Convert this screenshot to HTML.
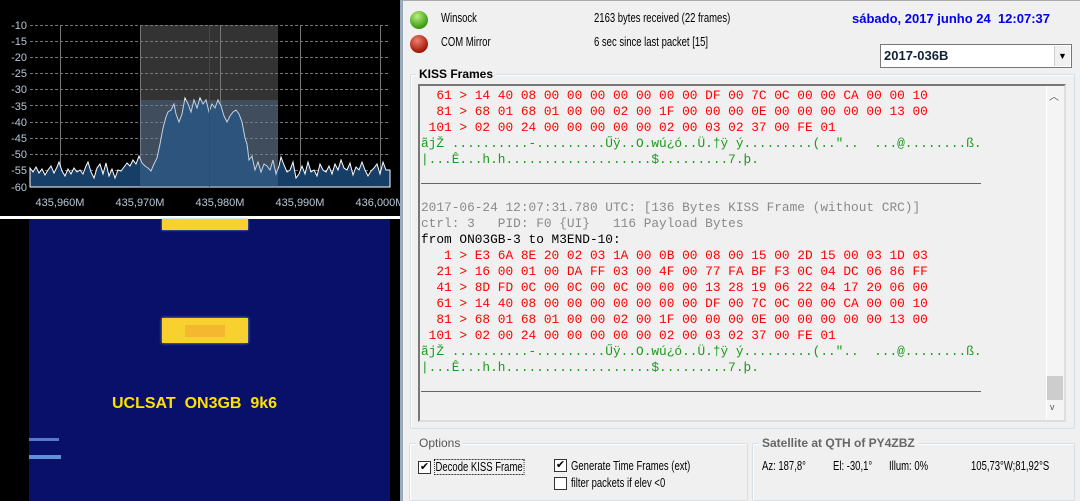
<!DOCTYPE html>
<html><head><meta charset="utf-8"><style>
*{margin:0;padding:0;box-sizing:border-box}
body{width:1080px;height:501px;overflow:hidden;background:#f0f0f0;position:relative;font-family:"Liberation Sans",sans-serif}
.a{position:absolute}
.t{position:absolute;font-size:12.5px;color:#000;white-space:nowrap;transform:scaleX(.76);transform-origin:left}
.mono{position:absolute;left:421px;font-family:"Liberation Mono",monospace;font-size:12.8px;line-height:16px;white-space:pre}
.r{color:#f00}.g{color:#1a9a1a}.gr{color:#8a8a8a}.k{color:#000}
.grp{position:absolute;border:1px solid #d5dfe5;border-radius:2px;box-shadow:inset 1px 1px 0 #fff}
.lg{position:absolute;background:#f0f0f0;padding:0 3px;font-size:12px;font-weight:bold;color:#000;top:-8px;left:6px}
.cb{position:absolute;width:13px;height:13px;border:1px solid #333;background:#fff;font-size:11px;line-height:11px;text-align:center}
</style></head><body>
<div class="a" style="left:0;top:0;width:400px;height:216px;background:#000"></div>
<svg class="a" style="left:0;top:0" width="400" height="216">
<rect x="140" y="25" width="138" height="162" fill="#333"/>
<g stroke="#777" stroke-dasharray="3,2" stroke-width="1">
<line x1="30" x2="390" y1="25.5" y2="25.5"/><line x1="30" x2="390" y1="41.5" y2="41.5"/><line x1="30" x2="390" y1="57.5" y2="57.5"/><line x1="30" x2="390" y1="73.5" y2="73.5"/><line x1="30" x2="390" y1="89.5" y2="89.5"/><line x1="30" x2="390" y1="105.5" y2="105.5"/><line x1="30" x2="390" y1="122.5" y2="122.5"/><line x1="30" x2="390" y1="138.5" y2="138.5"/><line x1="30" x2="390" y1="154.5" y2="154.5"/><line x1="30" x2="390" y1="170.5" y2="170.5"/>
</g>
<g stroke="#777"><line x1="60.5" x2="60.5" y1="25" y2="187"/><line x1="140.5" x2="140.5" y1="25" y2="187"/><line x1="220.5" x2="220.5" y1="25" y2="187"/><line x1="300.5" x2="300.5" y1="25" y2="187"/><line x1="380.5" x2="380.5" y1="25" y2="187"/></g>
<path d="M30,168 L33,172 36,167 39,173 42,169 45,175 48,170 51,166 54,173 57,167 59,162 62,171 65,176 68,169 71,174 74,168 77,172 80,170 83,174 86,166 88,162 91,172 94,178 97,168 100,164 103,174 106,163 109,176 112,169 115,178 118,170 121,171 124,167 127,163 130,166 133,160 136,164 139,156 142,163 145,166 148,168 151,171 154,164 157,158 160,144 163,128 166,117 168,112 171,110 174,104 176,114 179,122 182,114 185,98 188,104 191,112 194,100 197,108 200,98 203,104 206,100 209,112 212,104 215,108 218,100 221,106 224,116 227,122 230,116 233,112 236,110 239,114 242,122 245,138 247,144 249,160 252,156 255,170 258,162 261,172 264,164 267,166 270,170 273,160 276,174 279,166 281,157 284,165 287,172 290,170 293,162 296,178 299,174 302,166 305,174 308,162 311,172 314,170 317,176 320,164 323,170 326,172 329,166 332,174 335,164 338,170 341,160 344,168 347,170 350,163 353,175 356,167 359,170 362,162 365,170 368,176 371,171 374,168 377,164 380,174 383,162 386,170 390,170 L390,187 L30,187 Z" fill="#163e66" stroke="#fff" stroke-width="1"/>
<rect x="140" y="100" width="138" height="87" fill="#5a7fa8" opacity=".35"/>
<line x1="209.5" x2="209.5" y1="25" y2="187" stroke="#e00"/>
<g fill="#b8c8d8" font-family="Liberation Sans" font-size="11" text-anchor="end">
<text x="27" y="29">-10</text><text x="27" y="45">-15</text><text x="27" y="61">-20</text><text x="27" y="77">-25</text><text x="27" y="93">-30</text><text x="27" y="110">-35</text><text x="27" y="126">-40</text><text x="27" y="142">-45</text><text x="27" y="158">-50</text><text x="27" y="174">-55</text><text x="27" y="191">-60</text></g>
<g fill="#b8c8d8" font-family="Liberation Sans" font-size="11" text-anchor="middle">
<text x="60" y="206">435,960M</text><text x="140" y="206">435,970M</text><text x="220" y="206">435,980M</text><text x="300" y="206">435,990M</text><text x="380" y="206">436,000M</text></g>
</svg>
<div class="a" style="left:0;top:216px;width:400px;height:3px;background:#fff"></div>
<div class="a" style="left:0;top:219px;width:400px;height:282px;background:#000"></div>
<div class="a" style="left:29px;top:219px;width:361px;height:282px;background:#08106a"></div>
<div class="a" style="left:162px;top:219px;width:86px;height:11px;background:#f8d030;box-shadow:0 0 2px #7ac"></div>
<div class="a" style="left:162px;top:318px;width:86px;height:25px;background:#f8d030;box-shadow:0 0 3px #7ac"></div>
<div class="a" style="left:185px;top:325px;width:40px;height:12px;background:#f09030;opacity:.4"></div>
<div class="a" style="left:29px;top:438px;width:30px;height:3px;background:#5878c8"></div>
<div class="a" style="left:29px;top:455px;width:32px;height:4px;background:#6090d8"></div>
<div class="a" style="left:112px;top:395px;font:bold 16px 'Liberation Sans',sans-serif;color:#ffe000;white-space:pre">UCLSAT  ON3GB  9k6</div>
<div class="a" style="left:400px;top:0;width:3px;height:501px;background:#9ab"></div>
<div class="a" style="left:403px;top:0;width:677px;height:501px;background:#f0f0f0;border-top:1px solid #aaa"></div>
<div class="a" style="left:410px;top:11px;width:18px;height:18px;border-radius:50%;background:radial-gradient(circle at 40% 30%,#b8f080,#3a9a10 70%)"></div>
<div class="a" style="left:410px;top:35px;width:18px;height:18px;border-radius:50%;background:radial-gradient(circle at 40% 30%,#f08070,#a01808 70%)"></div>
<div class="t" style="left:441px;top:11px">Winsock</div>
<div class="t" style="left:441px;top:35px">COM Mirror</div>
<div class="t" style="left:594px;top:11px">2163 bytes received (22 frames)</div>
<div class="t" style="left:594px;top:35px">6 sec since last packet [15]</div>
<div class="a" style="left:852px;top:11px;font:bold 13px 'Liberation Sans',sans-serif;color:#0000ee;white-space:nowrap">sábado, 2017 junho 24&nbsp; 12:07:37</div>
<div class="a" style="left:880px;top:44px;width:192px;height:24px;border:1px solid #777;background:#fff"></div>
<div class="a" style="left:884px;top:48px;font:bold 13px 'Liberation Sans',sans-serif;color:#123">2017-036B</div>
<div class="a" style="left:1054px;top:46px;width:16px;height:20px;background:#f0f0f0;border-left:1px solid #ccc;font-size:9px;text-align:center;line-height:20px">▼</div>
<div class="grp" style="left:410px;top:74px;width:665px;height:355px"><div class="lg" style="left:5px">KISS Frames</div></div>
<div class="a" style="left:418px;top:84px;width:648px;height:338px;border:2px solid #777;border-right-color:#ddd;border-bottom-color:#ddd"></div>
<div class="a" style="left:1046px;top:86px;width:18px;height:334px;background:#f4f4f4;border-left:1px solid #fff"></div>
<div class="a" style="left:1047px;top:376px;width:16px;height:24px;background:#cdcdcd"></div>
<div class="a" style="left:1049px;top:88px;font-size:10px;color:#555">︿</div>
<div class="a" style="left:1050px;top:402px;font-size:9px;color:#555">v</div>
<div class="mono r" style="top:88px">  61 &gt; 14 40 08 00 00 00 00 00 00 00 DF 00 7C 0C 00 00 CA 00 00 10
  81 &gt; 68 01 68 01 00 00 02 00 1F 00 00 00 0E 00 00 00 00 00 13 00
 101 &gt; 02 00 24 00 00 00 00 00 02 00 03 02 37 00 FE 01</div>
<div class="mono g" style="top:136px">ãjŽ ..........-.........Űÿ..O.wú¿ó..Ü.†ÿ ý.........(.."..  ...@........ß.
|...Ê...h.h...................$.........7.þ.</div>
<div class="a" style="left:421px;top:183px;width:560px;height:1px;background:#666"></div>
<div class="mono gr" style="top:200px">2017-06-24 12:07:31.780 UTC: [136 Bytes KISS Frame (without CRC)]
ctrl: 3   PID: F0 {UI}   116 Payload Bytes</div>
<div class="mono k" style="top:232px">from ON03GB-3 to M3END-10:</div>
<div class="mono r" style="top:248px">   1 &gt; E3 6A 8E 20 02 03 1A 00 0B 00 08 00 15 00 2D 15 00 03 1D 03
  21 &gt; 16 00 01 00 DA FF 03 00 4F 00 77 FA BF F3 0C 04 DC 06 86 FF
  41 &gt; 8D FD 0C 00 0C 00 0C 00 00 00 13 28 19 06 22 04 17 20 06 00
  61 &gt; 14 40 08 00 00 00 00 00 00 00 DF 00 7C 0C 00 00 CA 00 00 10
  81 &gt; 68 01 68 01 00 00 02 00 1F 00 00 00 0E 00 00 00 00 00 13 00
 101 &gt; 02 00 24 00 00 00 00 00 02 00 03 02 37 00 FE 01</div>
<div class="mono g" style="top:344px">ãjŽ ..........-.........Űÿ..O.wú¿ó..Ü.†ÿ ý.........(.."..  ...@........ß.
|...Ê...h.h...................$.........7.þ.</div>
<div class="a" style="left:421px;top:391px;width:560px;height:1px;background:#666"></div>
<div class="grp" style="left:409px;top:443px;width:339px;height:58px"><div class="lg" style="font-weight:normal;color:#555;font-size:12px">Options</div></div>
<div class="grp" style="left:752px;top:443px;width:323px;height:58px"><div class="lg" style="color:#666;font-size:12px">Satellite at QTH of PY4ZBZ</div></div>
<div class="cb" style="left:418px;top:461px">✔</div>
<div class="t" style="left:434px;top:459px;border:1px dotted #000;padding:0 1px">Decode KISS Frame</div>
<div class="cb" style="left:554px;top:459px">✔</div>
<div class="t" style="left:571px;top:459px">Generate Time Frames (ext)</div>
<div class="cb" style="left:554px;top:477px"></div>
<div class="t" style="left:571px;top:476px">filter packets if elev &lt;0</div>
<div class="t" style="left:762px;top:459px">Az: 187,8°</div>
<div class="t" style="left:833px;top:459px">El: -30,1°</div>
<div class="t" style="left:889px;top:459px">Illum: 0%</div>
<div class="t" style="left:971px;top:459px">105,73°W;81,92°S</div>
</body></html>
